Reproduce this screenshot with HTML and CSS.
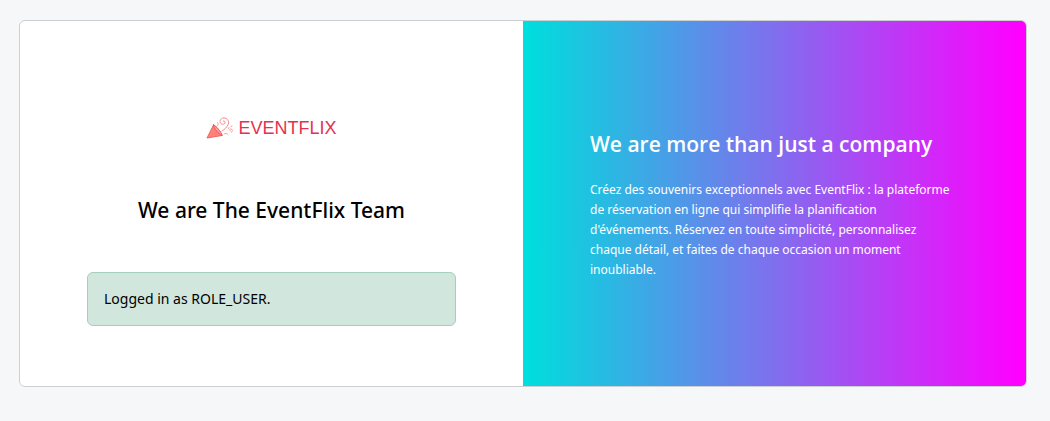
FILE: index.html
```html
<!DOCTYPE html>
<html lang="fr">
<head>
<meta charset="utf-8">
<meta name="viewport" content="width=device-width, initial-scale=1">
<title>EventFlix</title>
<link rel="stylesheet" href="styles.css">
</head>
<body>
<main class="card">
  <section class="panel">
    <div class="logo">
      <svg class="logo-icon" viewBox="0 0 28 24" aria-hidden="true">
        <path class="cone" d="M7.500 9L1 22L16 19.500Z"/>
        <path class="mouth" d="M7.500 9C10 9.500 15.500 16 16 19.500C13 18.500 7.500 12.500 7.500 9Z"/>
        <path class="curl" d="M16 15C21 12 24.500 7 21.500 3.500C19 .5 13.500 2 14 6C14.500 9 19 9 19 6.500C19 5 17.500 4.500 17 5.500"/>
        <path class="bits" d="M11 10C12.500 9 12.500 7.500 11.500 6.500M18 18C19.500 17 21 17.500 22 18.500M22.500 12.500L23 11.500M25 10.500L26 10M24.500 15C23 14 23.500 12.500 25 13C27 13.500 27 15.500 25.500 16"/>
      </svg>
      <span class="logo-name">EVENTFLIX</span>
    </div>
    <h1 class="team">We are The EventFlix Team</h1>
    <div class="alert" role="status">Logged in as ROLE_USER.</div>
  </section>
  <section class="panel about">
    <h2 class="about-title">We are more than just a company</h2>
    <p class="about-text">Créez des souvenirs exceptionnels avec EventFlix : la plateforme de réservation en ligne qui simplifie la planification d'événements. Réservez en toute simplicité, personnalisez chaque détail, et faites de chaque occasion un moment inoubliable.</p>
  </section>
</main>
</body>
</html>
```
FILE: styles.css
```css
* { box-sizing: border-box; }
body {
  margin: 0;
  padding: 20px 23px 34px 19px;
  background: #f5f7f9;
  color: #000;
  font-family: "Noto Sans", "Open Sans", sans-serif;
}
.card {
  display: grid;
  grid-template-columns: 1fr 1fr;
  overflow: hidden;
  border: 1px solid #cdd0d2;
  border-radius: 6px;
  background: #fff;
}
.panel { padding: 60px 67px; }
.logo {
  display: flex;
  align-items: center;
  justify-content: center;
  gap: 4px;
  padding: 35px 0 53px;
}
.logo-icon { width: 28px; height: 24px; fill: none; stroke-linecap: round; }
.cone { fill: #ff8278; stroke: #f2645f; }
.mouth { fill: #f9a39b; stroke: #e9525b; }
.curl { stroke: #f2808a; stroke-dasharray: 4 1; }
.bits { stroke: #f5a09e; }
.logo-name {
  color: #e3324f;
  font: 18px/20px "Liberation Sans", Arial, sans-serif;
}
.team {
  margin: 0 0 45px;
  font-size: 21px;
  line-height: 34px;
  font-weight: 500;
  text-align: center;
}
.alert {
  padding: 16px;
  border: 1px solid #a3cfbb;
  border-radius: 6px;
  background: #d1e7dd;
  font-size: 14px;
  line-height: 20px;
}
.about {
  display: flex;
  flex-direction: column;
  justify-content: center;
  background: linear-gradient(90deg, #00dddd 1%, #f0f 99%);
  color: #fff;
}
.about-title {
  margin: 0 0 20px;
  font-family: "Open Sans", "Noto Sans", sans-serif;
  font-size: 21px;
  line-height: 32px;
  font-weight: 600;
}
.about-text {
  margin: 0;
  font-size: 12px;
  line-height: 20px;
}
```
